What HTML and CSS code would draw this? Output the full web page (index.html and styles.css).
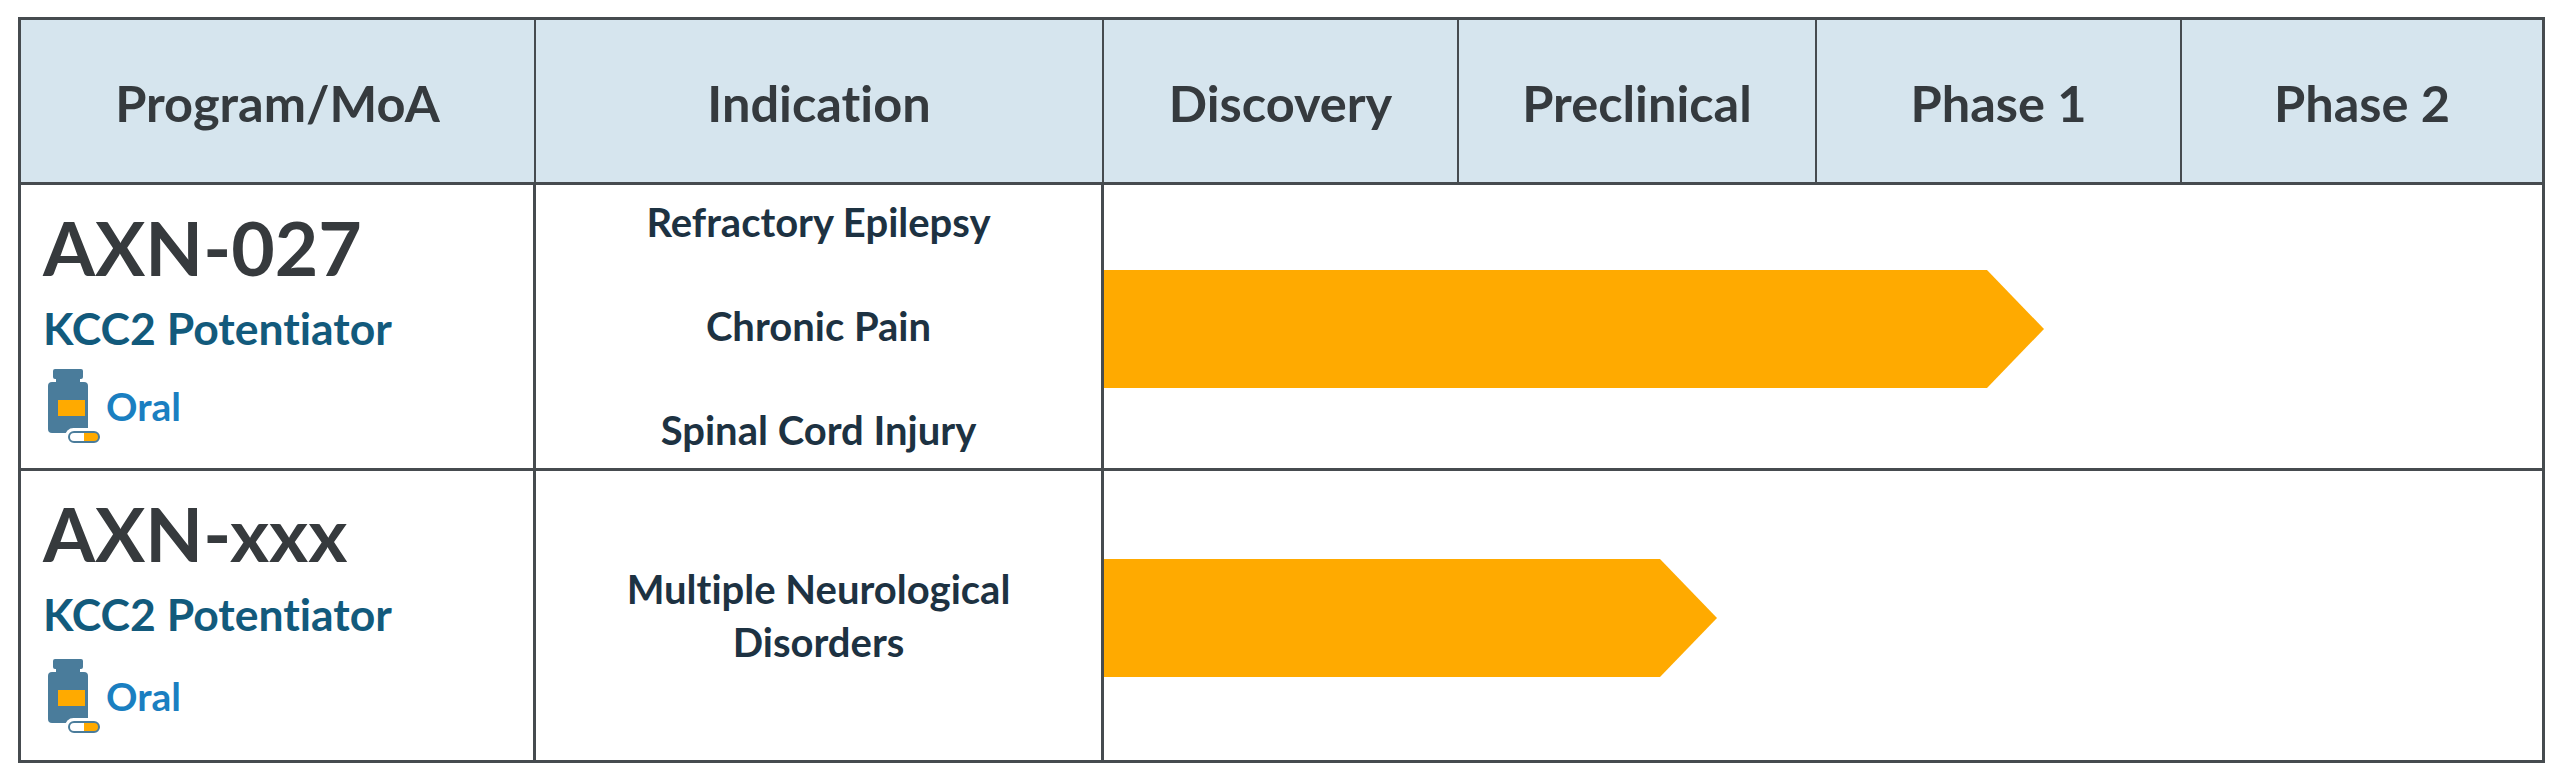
FILE: index.html
```html
<!DOCTYPE html>
<html lang="en">
<head>
<meta charset="utf-8">
<title>Pipeline</title>
<link rel="stylesheet" href="styles.css">
</head>
<body>
<div class="page">
  <div class="pipeline">
    <div class="hcell">Program/MoA</div>
    <div class="hcell">Indication</div>
    <div class="hcell">Discovery</div>
    <div class="hcell">Preclinical</div>
    <div class="hcell">Phase 1</div>
    <div class="hcell hcell-last">Phase 2</div>

    <div class="prog row-first">
      <div class="prog-name">AXN-027</div>
      <div class="prog-moa">KCC2 Potentiator</div>
      <div class="route">
        <svg class="route-icon" viewBox="0 0 54 76" width="54" height="76" aria-hidden="true">
          <rect x="5" y="0" width="30" height="10" rx="2" fill="#4a7c9b"/>
          <rect x="8" y="9" width="24" height="5" fill="#4a7c9b"/>
          <rect x="0" y="13" width="40" height="51" rx="4" fill="#4a7c9b"/>
          <rect x="10" y="31" width="27" height="16" fill="#ffaa00"/>
          <rect x="17" y="59" width="37" height="17" rx="8.5" fill="#ffffff"/>
          <rect x="21" y="63" width="30" height="10" rx="5" fill="#ffffff"/>
          <path d="M36 63 H46 A5 5 0 0 1 46 73 H36 Z" fill="#ffaa00"/>
          <rect x="21" y="63" width="30" height="10" rx="5" fill="none" stroke="#4a7c9b" stroke-width="2"/>
        </svg>
        <span class="route-label">Oral</span>
      </div>
    </div>
    <div class="ind row-first ind-multi">
      <div class="ind-line">Refractory Epilepsy</div>
      <div class="ind-line">Chronic Pain</div>
      <div class="ind-line">Spinal Cord Injury</div>
    </div>
    <div class="track row-first">
      <div class="bar" style="width:940px"></div>
    </div>

    <div class="prog">
      <div class="prog-name">AXN-xxx</div>
      <div class="prog-moa">KCC2 Potentiator</div>
      <div class="route route-second">
        <svg class="route-icon" viewBox="0 0 54 76" width="54" height="76" aria-hidden="true">
          <rect x="5" y="0" width="30" height="10" rx="2" fill="#4a7c9b"/>
          <rect x="8" y="9" width="24" height="5" fill="#4a7c9b"/>
          <rect x="0" y="13" width="40" height="51" rx="4" fill="#4a7c9b"/>
          <rect x="10" y="31" width="27" height="16" fill="#ffaa00"/>
          <rect x="17" y="59" width="37" height="17" rx="8.5" fill="#ffffff"/>
          <rect x="21" y="63" width="30" height="10" rx="5" fill="#ffffff"/>
          <path d="M36 63 H46 A5 5 0 0 1 46 73 H36 Z" fill="#ffaa00"/>
          <rect x="21" y="63" width="30" height="10" rx="5" fill="none" stroke="#4a7c9b" stroke-width="2"/>
        </svg>
        <span class="route-label">Oral</span>
      </div>
    </div>
    <div class="ind">
      <div class="ind-text">Multiple Neurological<br>Disorders</div>
    </div>
    <div class="track">
      <div class="bar" style="width:613px"></div>
    </div>
  </div>
</div>
</body>
</html>
```

FILE: styles.css
```css
* { box-sizing: border-box; }

html, body {
  margin: 0;
  padding: 0;
  background: #ffffff;
}

.page {
  padding: 17px 0 0 18px;
}

.pipeline {
  width: 2527px;
  display: grid;
  grid-template-columns: 515px 568px 355px 358px 365px 360px;
  grid-template-rows: 165px 286px 289px;
  border: 3px solid #464b4f;
  font-family: "Lato", "Open Sans", sans-serif;
  font-variant-ligatures: none;
}

.hcell {
  background: #d6e5ee;
  border-right: 2px solid #464b4f;
  border-bottom: 3px solid #464b4f;
  display: flex;
  align-items: center;
  justify-content: center;
  padding-top: 2px;
  font-weight: 700;
  font-size: 50.5px;
  color: #353a3e;
}

.hcell-last {
  border-right: none;
}

.row-first {
  border-bottom: 3px solid #464b4f;
}

.prog {
  border-right: 3px solid #464b4f;
  padding: 22px 0 0 22px;
}

.prog-name {
  font-weight: 700;
  font-size: 75px;
  line-height: 80px;
  color: #363a3d;
}

.prog-moa {
  margin-top: 16px;
  font-weight: 700;
  font-size: 44.5px;
  line-height: 50px;
  color: #125a7c;
}

.route {
  margin-top: 16px;
  margin-left: 5px;
  display: flex;
  align-items: center;
  gap: 4px;
}

.route-second {
  margin-top: 20px;
}

.route-icon {
  display: block;
  flex: none;
}

.route-label {
  font-weight: 700;
  font-size: 39px;
  line-height: 44px;
  color: #1a7fc1;
  padding-bottom: 2px;
}

.ind {
  border-right: 3px solid #464b4f;
  display: flex;
  flex-direction: column;
  align-items: center;
  justify-content: center;
  text-align: center;
  font-weight: 700;
  font-size: 40px;
  line-height: 53px;
  color: #1d3242;
}

.ind-multi {
  gap: 51px;
}

.track {
  grid-column: span 4;
  display: flex;
  align-items: center;
  padding-top: 5px;
}

.bar {
  height: 118px;
  background: #ffaa00;
  clip-path: polygon(0 0, calc(100% - 57px) 0, 100% 50%, calc(100% - 57px) 100%, 0 100%);
}
```
